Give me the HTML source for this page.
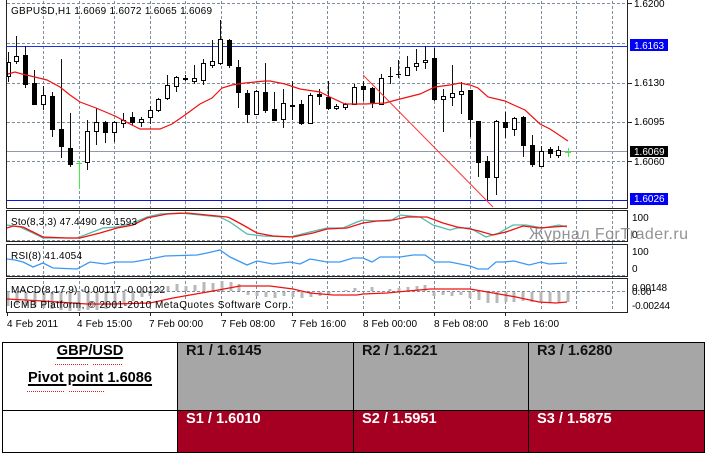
<!DOCTYPE html>
<html><head><meta charset="utf-8"><title>GBPUSD Pivot</title>
<style>
html,body{margin:0;padding:0;background:#fff;width:706px;height:455px;overflow:hidden}
svg{position:absolute;left:0;top:0}
svg text{font-family:"Liberation Sans",sans-serif;font-size:10px;fill:#000}
#chart{filter:blur(.35px)}
table{position:absolute;left:2px;top:342px;width:702px;height:110px;border-collapse:collapse;table-layout:fixed;font:bold 14.6px "Liberation Sans",Arial,sans-serif}
td{border:1px solid #000;padding:0;vertical-align:top;position:relative}
.g{background:#a6a6a6;color:#111}
.r{background:#a50021;color:#fff}
.g span,.r span{position:absolute;left:8px;top:0;line-height:16px}
.h{position:absolute;left:0;width:100%;text-align:center;line-height:16px}
.h b{text-decoration:underline;text-decoration-thickness:2px;text-underline-offset:2px}
</style></head><body>
<svg id="chart" width="706" height="342" viewBox="0 0 706 342" shape-rendering="crispEdges">
<!-- grid -->
<path fill="none" stroke="#7d8d9e" stroke-dasharray="3 2" d="M7 3.5H627M7 43.5H627M7 83.5H627M7 122.5H627M7 161.5H627M7 240.5H627M7 275.5H627M7 291.5H627
M43.5 1V208M79.5 1V208M114.5 1V208M150.5 1V208M185.5 1V208M221.5 1V208M256.5 1V208M292.5 1V208M327.5 1V208M363.5 1V208M399.5 1V208M434.5 1V208M470.5 1V208M505.5 1V208M541.5 1V208M576.5 1V208M612.5 1V208
M43.5 211V311M79.5 211V311M114.5 211V311M150.5 211V311M185.5 211V311M221.5 211V311M256.5 211V311M292.5 211V311M327.5 211V311M363.5 211V311M399.5 211V311M434.5 211V311M470.5 211V311M505.5 211V311M541.5 211V311M576.5 211V311M612.5 211V311"/>
<!-- levels -->
<path fill="none" stroke="#8f9bab" d="M7 151.5H627"/>
<path fill="none" stroke="#1c30e8" d="M7 46.5H627"/>
<path fill="none" stroke="#0a18d8" d="M7 200.5H627"/>
<!-- wicks -->
<path fill="none" stroke="#111" d="M8.5 52V82M16.5 36V64M25.5 46V88M34.5 70V105M43.5 86V110M52.5 92V137M61.5 59V158M70.5 113V167M87.5 120V170M96.5 108V145M105.5 121V143M114.5 121V142M123.5 113V128M132.5 112V125M141.5 117V127M150.5 106V124M158.5 98V112M167.5 75V100M176.5 76V92M185.5 75V81M194.5 65V84M203.5 59V85M212.5 40V68M220.5 20V65M229.5 39V68M238.5 60V108M247.5 90V123M256.5 90V115M265.5 63V113M274.5 92V121M283.5 89V128M292.5 81V120M301.5 100V125M310.5 93V124M319.5 89V105M328.5 81V110M336.5 104V110M345.5 103V110M354.5 84V105M363.5 81V101M372.5 87V108M381.5 74V105M390.5 67V84M398.5 60V78M407.5 56V76M416.5 49V71M425.5 46V69M434.5 48V101M443.5 89V132M452.5 65V106M461.5 82V114M470.5 90V137M478.5 121V177M487.5 156V200M496.5 120V195M505.5 112V138M514.5 117V136M523.5 116V157M532.5 135V167M541.5 146V167M550.5 147V158M558.5 146V158"/>
<!-- black bodies -->
<path fill="#000" d="M23 55h5v30h-5zM32 83h5v22h-5zM50 96h5v34h-5zM59 129h5v18h-5zM68 148h5v17h-5zM103 122h5v11h-5zM130 117h5v6h-5zM183 78h5v2h-5zM227 40h5v26h-5zM236 67h5v26h-5zM245 93h5v22h-5zM263 92h5v19h-5zM272 109h5v12h-5zM290 105h5v2h-5zM299 104h5v20h-5zM317 94h5v3h-5zM326 97h5v12h-5zM361 86h5v4h-5zM370 88h5v15h-5zM388 76h5v1h-5zM396 74h5v1h-5zM432 58h5v42h-5zM468 90h5v30h-5zM476 121h5v42h-5zM485 161h5v17h-5zM503 122h5v6h-5zM521 117h5v29h-5zM530 145h5v20h-5zM548 149h5v5h-5z"/>
<!-- white bodies -->
<path fill="#fff" stroke="#000" d="M7.5 62.5h3v14h-3zM14.5 56.5h4v5h-4zM41.5 95.5h4v9h-4zM85.5 131.5h4v31h-4zM94.5 122.5h4v9h-4zM112.5 122.5h4v10h-4zM121.5 120.5h4v3h-4zM139.5 119.5h4v3h-4zM148.5 110.5h4v7h-4zM156.5 99.5h4v11h-4zM165.5 85.5h4v13h-4zM174.5 77.5h4v9h-4zM192.5 78.5h4v3h-4zM201.5 63.5h4v17h-4zM210.5 61.5h4v4h-4zM218.5 39.5h4v24h-4zM254.5 91.5h4v23h-4zM281.5 103.5h4v16h-4zM308.5 95.5h4v28h-4zM334.5 106.5h4v2h-4zM343.5 104.5h4v3h-4zM352.5 87.5h4v17h-4zM379.5 78.5h4v26h-4zM405.5 67.5h4v8h-4zM414.5 63.5h4v3h-4zM423.5 60.5h4v2h-4zM441.5 96.5h4v3h-4zM450.5 93.5h4v4h-4zM459.5 91.5h4v3h-4zM494.5 121.5h4v56h-4zM512.5 118.5h4v11h-4zM539.5 151.5h4v15h-4zM556.5 150.5h4v5h-4z"/>
<!-- green bars -->
<path fill="none" stroke="#3fee3f" d="M79.5 162V189M76 163.5H82M568.5 148V157M565 152.5H571"/>
<g shape-rendering="auto" fill="none">
<!-- MA -->
<path stroke="#f01010" stroke-width="1.2" d="M8 74L15 72L22 74L35 77L47 80L60 87L70 95L80 102L96 108L115 116L130 124L140 129L160 129L172 124L185 115L200 104L212 98L222 88L232 85L245 83L265 81L270 81L285 84L300 89L320 92L330 97L345 104L365 104L385 103L400 99L420 94L435 87L450 85L460 83L470 85L478 88L488 97L505 101L516 106L525 110L540 124L550 129L568 141"/>
<!-- trend -->
<path stroke="#f33" d="M363 75L493 207"/>
<!-- Sto -->
<path stroke="#4fbcac" stroke-width="1.3" d="M7 225L13 226L20 227L33 233L43 238L57 238L77 238L90 233L103 228L117 227L133 223L147 217L160 214L180 213L200 215L220 217L230 222L247 234L263 236L290 237L310 232L327 228L343 228L357 222L363 220L377 221L390 221L400 215L420 217L433 225L450 230L457 228L470 228L486 237L499 233L513 225L526 225L543 228L559 225L567 227"/>
<path stroke="#f01010" stroke-width="1.3" d="M7 228L13 226L23 227L33 232L43 237L67 238L80 238L100 233L117 228L133 225L147 218L167 214L187 213L207 215L227 217L230 218L243 225L257 233L273 236L293 237L313 233L327 229L347 228L363 223L377 221L393 220L407 217L427 217L443 223L457 227L470 229L479 231L493 235L506 232L523 226L539 228L567 226"/>
<!-- RSI -->
<path stroke="#3c98f5" stroke-width="1.3" d="M7 259L15 260L23 262L33 267L43 263L53 268L77 269L90 262L105 264L115 262L133 262L150 259L165 256L197 255L207 253L220 250L230 257L247 265L257 261L273 264L290 262L300 264L310 259L327 262L340 262L353 258L363 258L372 262L380 257L400 257L413 255L425 255L435 262L450 262L470 266L478 269L488 269L496 262L503 262L514 261L529 265L541 262L549 264L567 263"/>
<!-- MACD hist -->
<path stroke="#b8b8b8" stroke-width="3" d="M8 292V306M17 292V305M26 292V306M35 292V307M44 292V308M52 292V309M61 292V310M70 292V311M79 292V311M88 292V310M97 292V310M106 292V309M115 292V308M124 292V304M133 292V301M142 292V297M150 292V296M159 291V288M168 291V286M177 291V284M186 291V286M195 291V285M204 291V282M213 291V283M222 291V281M231 291V282M239 291V284M248 292V295M257 292V296M266 292V297M275 292V298M284 292V296M293 292V297M302 292V298M311 292V297M320 292V296M329 292V294M346 291V290M355 291V288M372 291V287M390 291V289M399 291V288M408 291V287M417 291V286M425 291V285M434 292V296M443 292V295M452 292V296M461 292V295M470 292V298M479 292V300M488 292V303M497 292V303M506 292V302M514 292V302M523 292V301M532 292V302M541 292V302M550 292V302M559 292V303M568 292V302"/>
<path stroke="#f01010" stroke-width="1.3" d="M7 299L43 301L87 304L113 304L150 303L173 298L213 291L240 286L270 286L293 289L310 293L333 295L357 295L363 294L387 293L397 292L430 289L470 289L476 290L499 294L516 297L539 302L556 303L567 302"/>
</g>
<!-- frames -->
<path fill="none" stroke="#222" d="M6.5 0V208.5M627.5 0V208.5M6.5 208.5H627.5M6.5 210.5H627.5V241.5H6.5ZM6.5 244.5H627.5V276.5H6.5ZM6.5 278.5H627.5V312.5H6.5Z"/>
<!-- ticks -->
<path fill="none" stroke="#222" d="M7.5 312V316M79.5 312V316M150.5 312V316M221.5 312V316M292.5 312V316M363.5 312V316M434.5 312V316M505.5 312V316M628 3.5H632M628 83.5H632M628 122.5H632M628 161.5H632"/>
<!-- labels boxes -->
<rect x="630" y="39" width="38" height="12" fill="#0000f5"/>
<rect x="630" y="146" width="38" height="11" fill="#000"/>
<rect x="630" y="193" width="38" height="12" fill="#0000f5"/>
<g shape-rendering="auto">
<text x="11" y="14" textLength="201" lengthAdjust="spacing">GBPUSD,H1  1.6069 1.6072 1.6065 1.6069</text>
<text x="634" y="7">1.6200</text>
<text x="634" y="49" style="fill:#fff" textLength="30">1.6163</text>
<text x="634" y="86">1.6130</text>
<text x="634" y="125">1.6095</text>
<text x="634" y="165">1.6060</text>
<text x="634" y="155" style="fill:#fff">1.6069</text>
<text x="634" y="202" style="fill:#fff">1.6026</text>
<text x="11" y="225" textLength="126" lengthAdjust="spacing">Sto(8,3,3) 47.4490 49.1593</text>
<text x="11" y="259" textLength="71" lengthAdjust="spacing">RSI(8) 41.4054</text>
<text x="11" y="293" textLength="154" lengthAdjust="spacing">MACD(8,17,9) -0.00117 -0.00122</text>
<text x="10" y="308" textLength="281" lengthAdjust="spacing">ICMB Platform, © 2001-2010 MetaQuotes Software Corp.</text>
<text x="632" y="221">100</text>
<text x="632" y="238">0</text>
<text x="632" y="255">100</text>
<text x="632" y="272">0</text>
<text x="632" y="291" textLength="35">0.00148</text>
<text x="632" y="295">0.00</text>
<text x="632" y="309" textLength="38">-0.00244</text>
<text x="529" y="239" style="font-size:16px;fill:#808080;fill-opacity:.85" textLength="159" lengthAdjust="spacing">Журнал ForTrader.ru</text>
<text x="7" y="327" textLength="51" lengthAdjust="spacing">4 Feb 2011</text>
<text x="77" y="327" textLength="55" lengthAdjust="spacing">4 Feb 15:00</text>
<text x="149" y="327" textLength="54" lengthAdjust="spacing">7 Feb 00:00</text>
<text x="221" y="327" textLength="54" lengthAdjust="spacing">7 Feb 08:00</text>
<text x="291" y="327" textLength="55" lengthAdjust="spacing">7 Feb 16:00</text>
<text x="363" y="327" textLength="54" lengthAdjust="spacing">8 Feb 00:00</text>
<text x="434" y="327" textLength="54" lengthAdjust="spacing">8 Feb 08:00</text>
<text x="504" y="327" textLength="55" lengthAdjust="spacing">8 Feb 16:00</text>
</g>
</svg>
<table>
<colgroup><col style="width:175px"><col style="width:176px"><col style="width:175px"><col style="width:176px"></colgroup>
<tr style="height:68px">
<td><div class="h" style="top:0"><b>GBP/USD</b></div><div class="h" style="top:27px"><b>Pivot point 1.6086</b></div></td>
<td class="g"><span>R1 / 1.6145</span></td><td class="g"><span>R2 / 1.6221</span></td><td class="g"><span>R3 / 1.6280</span></td>
</tr>
<tr style="height:42px">
<td></td>
<td class="r"><span>S1 / 1.6010</span></td><td class="r"><span>S2 / 1.5951</span></td><td class="r"><span>S3 / 1.5875</span></td>
</tr>
</table>
<svg width="706" height="455" style="pointer-events:none" shape-rendering="crispEdges"><path fill="none" stroke="#e02020" stroke-dasharray="1 1" d="M55 364.5H88M93 364.5H123M27 391.5H64M69 391.5H104"/></svg>
</body></html>
